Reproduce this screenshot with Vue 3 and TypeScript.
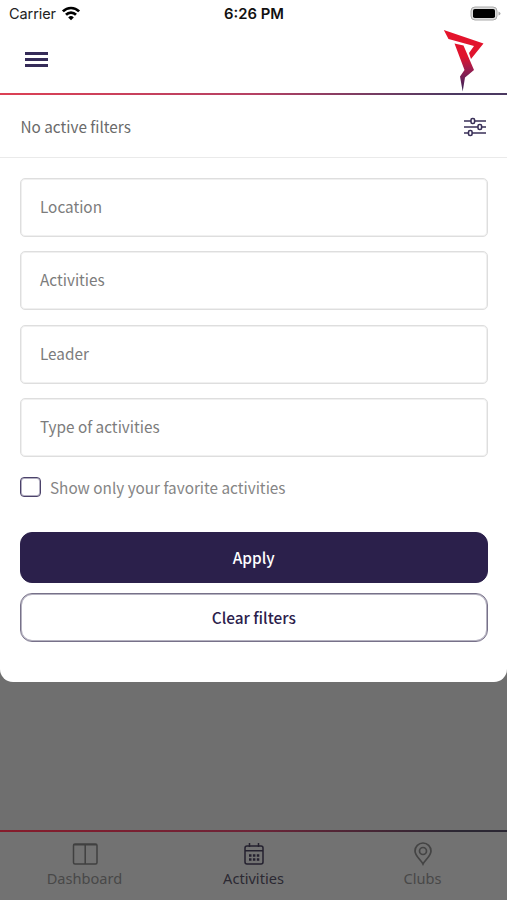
<script setup lang="ts">
import { ref } from 'vue'

const fields: string[] = ['Location', 'Activities', 'Leader', 'Type of activities']
const favoritesOnly = ref<boolean>(false)
</script>

<template>
  <div class="screen">
    <div class="status">
      <div class="carrier">
        <span>Carrier</span>
        <svg width="20" height="15" viewBox="0 0 20 15" fill="none" stroke="#000" stroke-width="2.7">
          <path d="M1.9 5.4a11.4 11.4 0 0 1 16.2 0" />
          <path d="M5 8.8a7 7 0 0 1 10 0" />
          <path d="M10 14.3l-2.8-2.9a4 4 0 0 1 5.6 0z" fill="#000" stroke="none" />
        </svg>
      </div>
      <div class="time">6:26 PM</div>
      <svg class="battery" width="31" height="15" viewBox="0 0 31 15">
        <rect x="1" y="1" width="26" height="13" rx="4" fill="#ddd" stroke="#aaa" />
        <rect x="3" y="3" width="22" height="9" rx="1.8" fill="#000" />
        <path d="M28.5 5.4q2 .7 2 2.1t-2 2.1z" fill="#aaa" />
      </svg>
    </div>

    <header class="header">
      <button class="menu" aria-label="Menu"><i /><i /><i /></button>
      <svg class="logo" width="42" height="64" viewBox="0 0 42 64">
        <defs>
          <linearGradient id="brand" x1="0" y1="0" x2="0" y2="64" gradientUnits="userSpaceOnUse">
            <stop offset="0" stop-color="#e6132b" />
            <stop offset=".43" stop-color="#df142e" />
            <stop offset=".62" stop-color="#a01c4d" />
            <stop offset=".8" stop-color="#652057" />
            <stop offset="1" stop-color="#2c2350" />
          </linearGradient>
        </defs>
        <path d="M.8 1L40.5 14.5L28 30L26 24L31 17L5.5 10Z" fill="url(#brand)" />
        <path d="M11.5 14.5L20.5 16.5L31 41L22 48.5L19.7 62.5L17 47.5L21.5 41Z" fill="url(#brand)" />
      </svg>
    </header>

    <main class="panel">
      <div class="summary">
        <span>No active filters</span>
        <svg width="24" height="20" viewBox="0 0 24 20" fill="none" stroke="#3a3058" stroke-width="1.6">
          <path d="M1 4H8M11.6 4H23M1 10H15M18.6 10H23M1 16H5.5M9.1 16H23" />
          <rect x="8" y="1.5" width="3.6" height="5" rx="1.5" />
          <rect x="15" y="7.5" width="3.6" height="5" rx="1.5" />
          <rect x="5.5" y="13.5" width="3.6" height="5" rx="1.5" />
        </svg>
      </div>

      <div class="fields">
        <div v-for="field in fields" :key="field" class="field">{{ field }}</div>
      </div>

      <label class="favorite">
        <input v-model="favoritesOnly" type="checkbox" />
        <span>Show only your favorite activities</span>
      </label>

      <button class="action apply">Apply</button>
      <button class="action clear">Clear filters</button>
    </main>

    <div class="backdrop" />

    <nav class="tabs">
      <div class="tab">
        <svg width="28" height="24" viewBox="0 0 28 24" fill="none" stroke="#404040" stroke-width="1.5">
          <rect x="2.5" y="2" width="23.5" height="20" rx="1.5" />
          <path d="M2.5 2.7H26M14.2 3V22" />
        </svg>
        <span>Dashboard</span>
      </div>
      <div class="tab active">
        <svg width="24" height="24" viewBox="0 0 24 24" fill="none" stroke="#24212f" stroke-width="1.5">
          <rect x="3" y="4" width="18" height="18" rx="2" />
          <path d="M3 8.7H21M7.5 1V5M16.5 1V5" />
          <path d="M7 13.5H9.5M10.9 13.5H13.4M14.8 13.5H17.3M7 17.5H9.5M10.9 17.5H13.4M14.8 17.5H17.3" stroke-width="2.5" />
        </svg>
        <span>Activities</span>
      </div>
      <div class="tab">
        <svg width="24" height="24" viewBox="0 0 24 24" fill="none" stroke="#444" stroke-width="1.7">
          <path d="M12 22C10 18 4 14 4 9a8 8 0 0 1 16 0c0 5-6 9-8 13z" />
          <circle cx="12" cy="9" r="3.5" />
        </svg>
        <span>Clubs</span>
      </div>
    </nav>
  </div>
</template>

<style>
body {
  background: #fff;
}
</style>

<style scoped>
* {
  box-sizing: border-box;
}

.screen {
  display: flex;
  flex-direction: column;
  width: 507px;
  height: 900px;
  overflow: hidden;
  background: #6f6f6f;
  font-family: "Noto Sans CJK SC", "Noto Sans", sans-serif;
  font-size: 15.3px;
  color: #6a6a6a;
}

svg {
  display: block;
  flex: none;
}

button {
  font: inherit;
  margin: 0;
}

.status {
  display: grid;
  grid-template-columns: 1fr auto 1fr;
  align-items: center;
  height: 27px;
  padding: 0 6px 0 9px;
  background: #fff;
  font-family: Inter, sans-serif;
  font-size: 14.5px;
  color: #222;
}

.carrier {
  display: flex;
  align-items: center;
  gap: 5px;
  letter-spacing: -0.08px;
}

.time {
  margin-right: 2px;
  font-size: 14.8px;
  font-weight: 600;
  color: #111;
}

.battery {
  justify-self: end;
}

.header {
  display: flex;
  justify-content: space-between;
  height: 68px;
  padding: 2px 22px 0 25px;
  background: linear-gradient(90deg, #dc4054, #b64164 50%, #4b3961 90%) bottom / 100% 2px no-repeat #fff;
}

.menu {
  display: flex;
  flex-direction: column;
  gap: 3.5px;
  width: 23px;
  padding: 23px 0 0;
  border: 0;
  background: none;
}

.menu i {
  height: 2.5px;
  width: 23px;
  background: #352b58;
}

.panel {
  display: flex;
  flex-direction: column;
  height: 587px;
  border-radius: 0 0 13px 13px;
  background: #fff;
}

.summary {
  display: flex;
  align-items: center;
  justify-content: space-between;
  height: 63px;
  padding: 1px 20px 0 20.5px;
  border-bottom: 1px solid #eaeaea;
}

.summary span {
  padding-bottom: 1px;
}

.summary svg {
  margin-top: 1px;
}

.fields {
  display: flex;
  flex-direction: column;
  gap: 14.4px;
  padding: 20px 19.5px 0 20px;
}

.field {
  display: flex;
  align-items: center;
  height: 59px;
  padding: 0 19px 3px;
  border: 1px solid #dedede;
  border-radius: 5px;
  box-shadow: inset 0 0 0 1px #f0f0f0;
  color: #7c7c7c;
}

.favorite {
  display: flex;
  align-items: center;
  gap: 10px;
  height: 20px;
  margin: 20px 20px 0;
  color: #858585;
}

.favorite input {
  appearance: none;
  width: 20.5px;
  height: 20px;
  margin: 0 -0.5px 0 0;
  border: 1px solid #4b426a;
  border-radius: 4px;
  box-shadow: inset 0 0 0 1px #b3afc1;
}

.action {
  margin: 0 19.5px 0 20px;
  border: 1px solid #2b204b;
  border-radius: 12px;
  font-size: 15.4px;
  font-weight: 500;
}

.apply {
  height: 51px;
  margin-top: 35px;
  padding: 0 0 1px;
  background: #2b204b;
  color: #fff;
}

.clear {
  height: 49px;
  margin-top: 10px;
  padding: 0 0 1px;
  border-color: #777189;
  box-shadow: inset 0 0 0 1px #b5b2c0;
  background: #fff;
  color: #2b204b;
}

.backdrop {
  flex: 1;
}

.tabs {
  display: grid;
  grid-template-columns: repeat(3, 1fr);
  height: 70px;
  padding: 12px 0 0;
  background: linear-gradient(90deg, #861c2b, #6d2437 50%, #2b2733 90%) top / 100% 2px no-repeat #727272;
  font-family: "Noto Sans", sans-serif;
  font-size: 14.6px;
  color: #484848;
}

.tab {
  display: flex;
  flex-direction: column;
  align-items: center;
  gap: 1px;
  line-height: 23px;
}

.active {
  color: #2b2932;
}
</style>
